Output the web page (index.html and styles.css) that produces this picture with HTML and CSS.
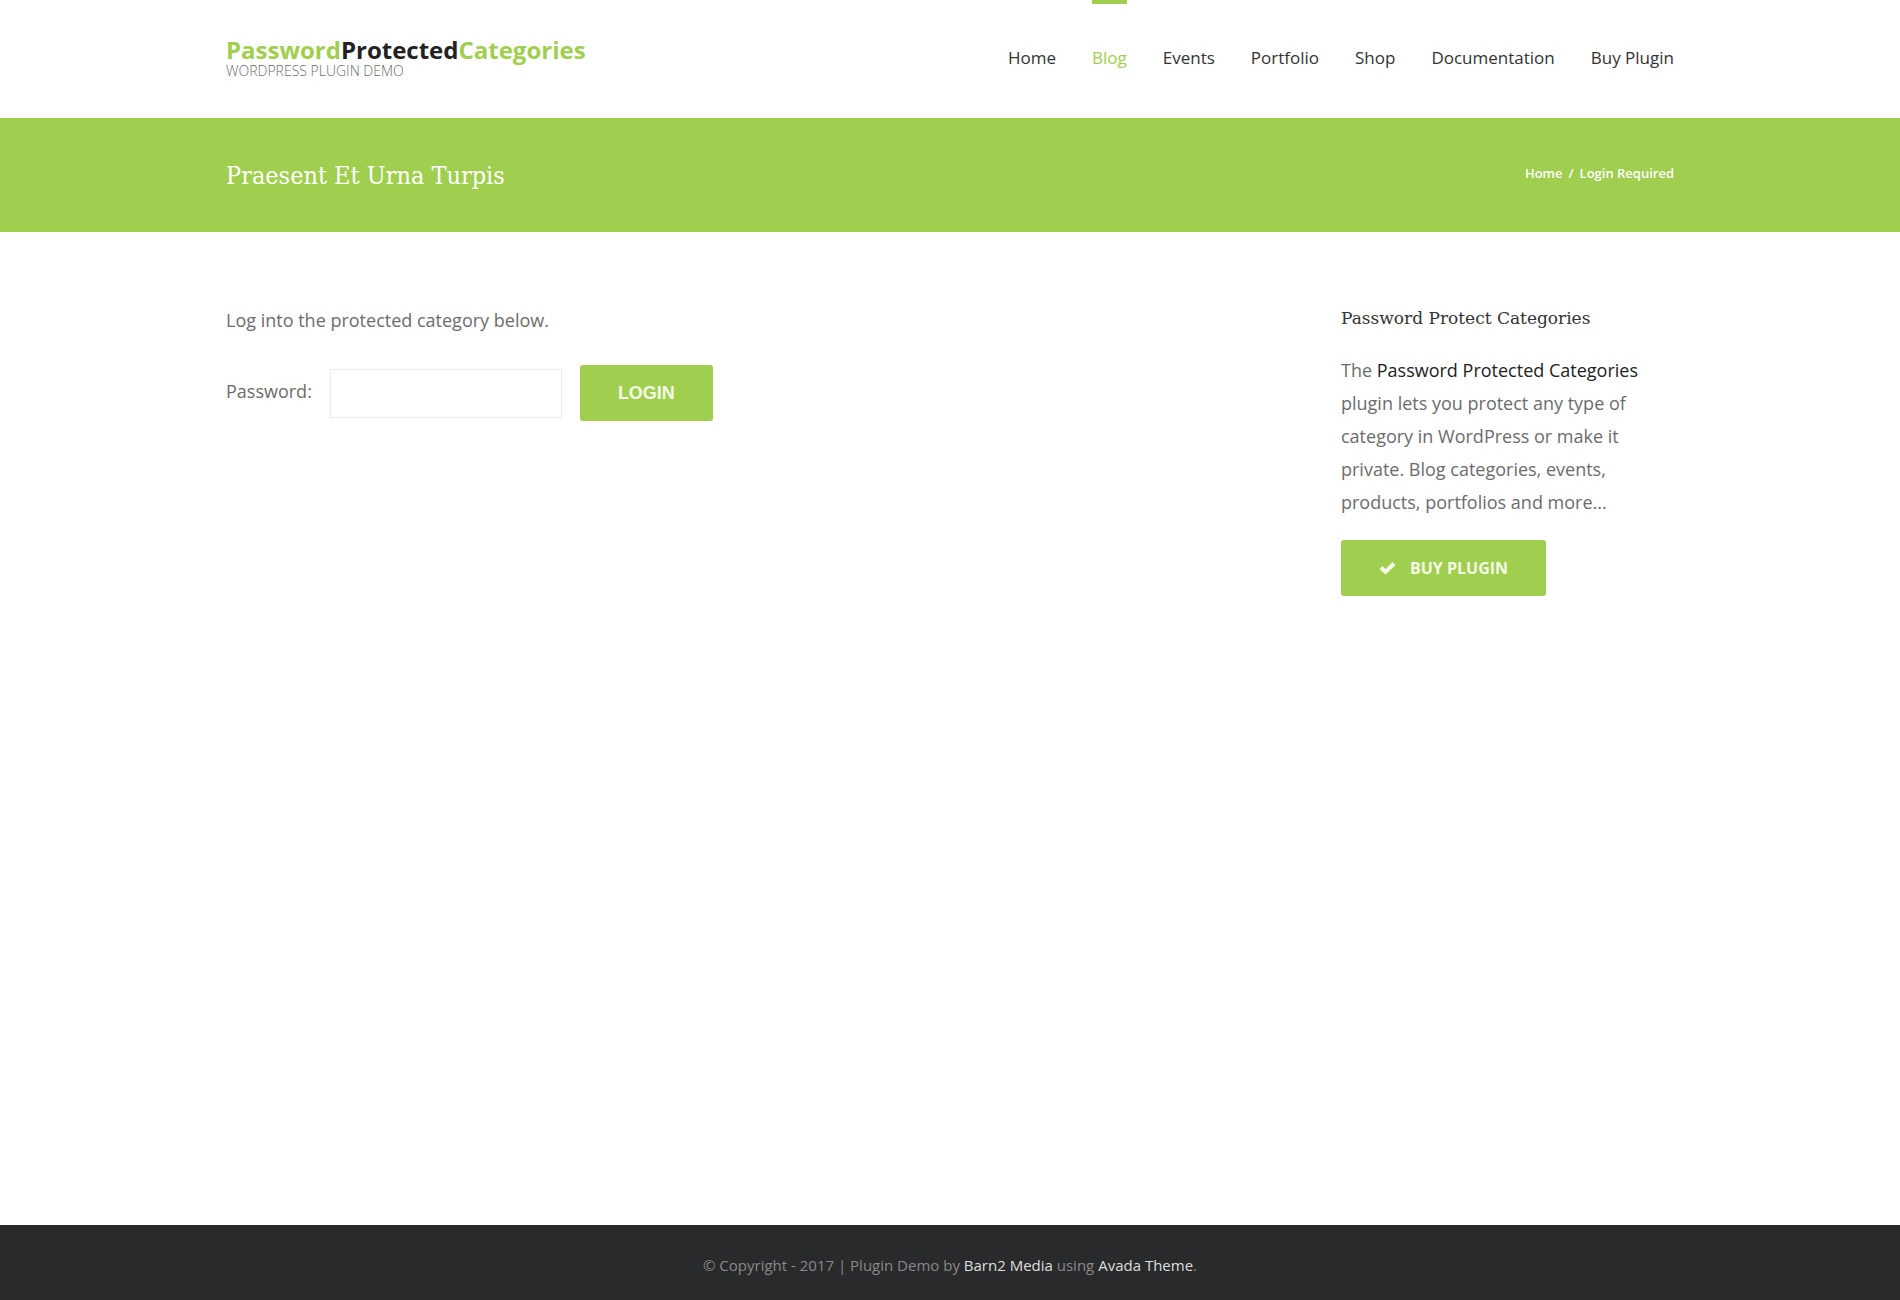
FILE: index.html
```html
<!DOCTYPE html>
<html lang="en">
<head>
  <meta charset="utf-8" />
  <meta name="viewport" content="width=device-width, initial-scale=1" />
  <title>Login Required - Password Protected Categories</title>
  <link rel="stylesheet" href="styles.css">
</head>
<body>
  <header class="header">
    <div class="container header-row">
      <a href="#" class="logo">
        <span class="logo-name">Password<span class="logo-dark">Protected</span>Categories</span>
        <span class="logo-tagline">WORDPRESS PLUGIN DEMO</span>
      </a>
      <nav class="menu">
        <a href="#">Home</a>
        <a href="#" class="active">Blog</a>
        <a href="#">Events</a>
        <a href="#">Portfolio</a>
        <a href="#">Shop</a>
        <a href="#">Documentation</a>
        <a href="#">Buy Plugin</a>
      </nav>
    </div>
  </header>

  <div class="titlebar">
    <div class="container titlebar-row">
      <h1>Praesent Et Urna Turpis</h1>
      <div class="breadcrumbs">
        <a href="#">Home</a>
        <span>/</span>
        <span>Login Required</span>
      </div>
    </div>
  </div>

  <main class="container main">
    <section class="content">
      <p>Log into the protected category below.</p>
      <form class="login">
        <label for="password">Password:</label>
        <input type="password" id="password" name="password" />
        <button type="submit" class="button button-login">LOGIN</button>
      </form>
    </section>

    <aside class="sidebar">
      <h2>Password Protect Categories</h2>
      <p>The <a href="#">Password Protected Categories</a> plugin lets you protect any type of category in WordPress or make it private. Blog categories, events, products, portfolios and more...</p>
      <a href="#" class="button button-buy">
        <svg width="17" height="14" viewBox="0 0 17 14" aria-hidden="true"><path d="M2 6.5 L6.5 11 L15 2.5" fill="none" stroke="currentColor" stroke-width="4" /></svg>
        BUY PLUGIN
      </a>
    </aside>
  </main>

  <footer class="footer">
    <p>© Copyright - 2017 | Plugin Demo by <a href="#">Barn2 Media</a> using <a href="#">Avada Theme</a>.</p>
  </footer>
</body>
</html>
```

FILE: styles.css
```css
* {
  box-sizing: border-box;
}
body {
  margin: 0;
  min-height: 100vh;
  display: flex;
  flex-direction: column;
  background: #fff;
  color: #6c6c6c;
  font-family: "Open Sans", "Noto Sans", sans-serif;
  font-size: 18px;
  line-height: 33px;
}
a {
  color: inherit;
  text-decoration: none;
}
h1, h2, p {
  margin: 0;
}
.container {
  width: 100%;
  max-width: 1448px;
  margin: 0 auto;
}

/* header */
.header-row {
  display: flex;
  justify-content: space-between;
  align-items: stretch;
  min-height: 118px;
}
.logo {
  display: flex;
  flex-direction: column;
  align-self: center;
}
.logo-name {
  color: #a0ce4e;
  font-size: 24px;
  font-weight: 700;
  line-height: 24px;
}
.logo-dark {
  color: #222;
}
.logo-tagline {
  font-size: 14px;
  font-weight: 300;
  line-height: 18px;
}
.menu {
  display: flex;
  gap: 36px;
  color: #333;
  font-size: 17px;
}
.menu a {
  border-top: 4px solid transparent;
  line-height: 108px;
}
.menu .active {
  border-color: #a0ce4e;
  color: #a0ce4e;
}

/* page title */
.titlebar {
  background: #a0ce4e;
  color: #fff;
}
.titlebar-row {
  display: flex;
  justify-content: space-between;
  align-items: center;
  min-height: 114px;
}
h1 {
  font-family: "DejaVu Serif Condensed", "DejaVu Serif", serif;
  font-size: 25px;
  font-weight: 400;
}
.breadcrumbs {
  display: flex;
  gap: 6px;
  padding-bottom: 4px;
  font-size: 13px;
  font-weight: 600;
}

/* content and sidebar */
.main {
  flex: 1;
  display: flex;
  justify-content: space-between;
  padding: 70px 0;
}
.content p {
  padding-top: 2px;
  margin-bottom: 28px;
}
.login {
  display: flex;
  align-items: center;
}
.login label {
  padding-bottom: 4px;
}
.login input {
  width: 232px;
  height: 49px;
  margin: 0 18px;
  padding: 0 15px;
  border: 1px solid #ebebeb;
  font: inherit;
}
.button {
  display: inline-flex;
  align-items: center;
  justify-content: center;
  height: 56px;
  padding: 0 38px;
  border: 0;
  border-radius: 3px;
  background: #a0ce4e;
  color: #f5fbe9;
  font-size: 16px;
  font-weight: 700;
}
.button-login {
  font-family: "Liberation Sans", Arial, sans-serif;
  font-size: 18px;
}
.button-buy {
  gap: 14px;
}
.sidebar {
  width: 333px;
}
.sidebar h2 {
  margin-bottom: 19px;
  color: #333;
  font-family: "DejaVu Serif", serif;
  font-size: 17px;
  font-weight: 400;
}
.sidebar p {
  margin-bottom: 21px;
}
.sidebar p a {
  color: #222;
}

/* footer */
.footer {
  padding: 24px 0 18px;
  background: #282a2b;
  color: #8c8989;
  font-size: 15px;
  text-align: center;
}
.footer a {
  color: #dedede;
}
```
